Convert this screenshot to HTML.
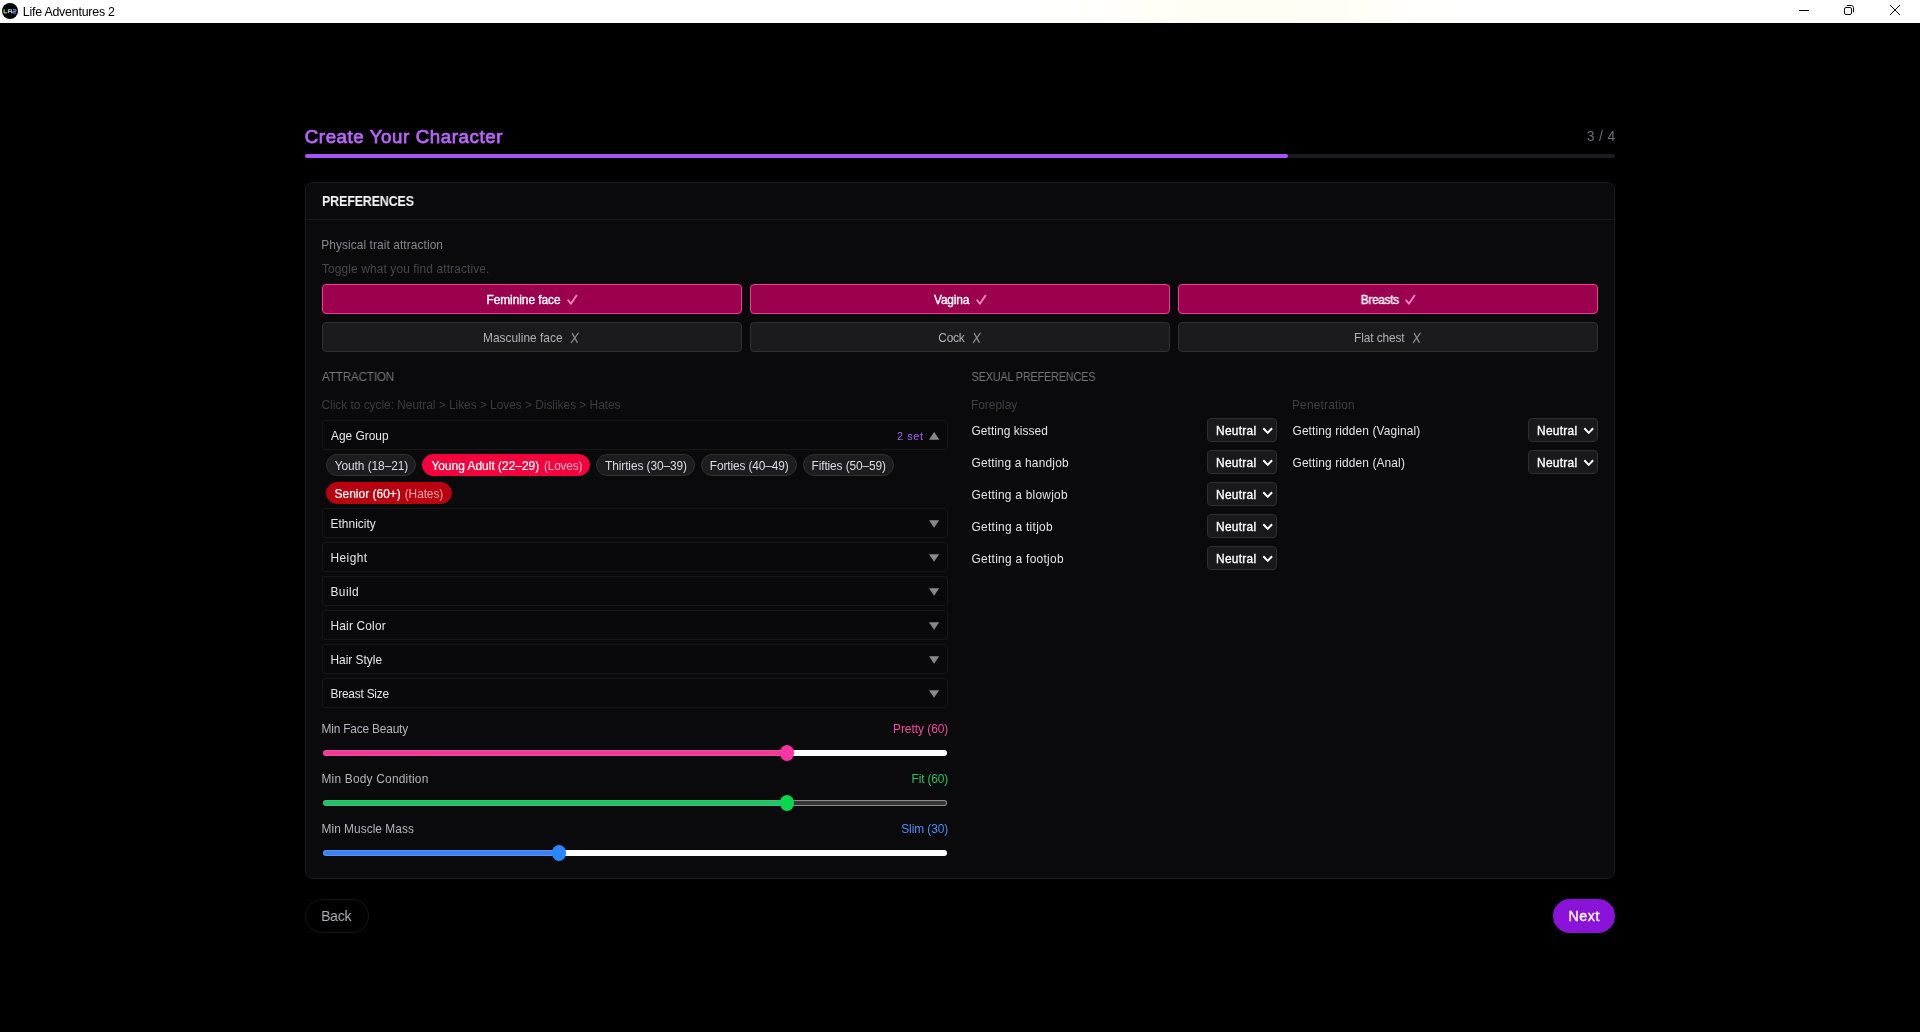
<!DOCTYPE html>
<html lang="en">
<head>
<meta charset="utf-8">
<title>Life Adventures 2</title>
<style>
*{box-sizing:border-box;margin:0;padding:0}
html,body{width:1920px;height:1032px;overflow:hidden;background:#000}
h1,h2,h3{font-weight:400;font-size:inherit}
button{border:0;background:none;font:inherit;color:inherit;padding:0;margin:0;appearance:none;-webkit-appearance:none;text-align:left;cursor:pointer;overflow:visible}
body{position:relative;font-family:"Liberation Sans",sans-serif;font-size:12px;color:#e6e6ea}
.app,.abs,.t,.titlebar,.track,.fill,.card,.hr,.trait,.row,.chip,.sel,.sl,.thumb,.pill,svg.i{position:absolute}
.t{will-change:transform;transform-origin:0 0;white-space:nowrap;line-height:16px;height:16px;display:block}
/* window chrome */
.titlebar{left:0;top:0;width:1920px;height:23px;background:linear-gradient(90deg,#fff 0,#fff 54%,#fffef4 63%,#fffef6 70%,#fff 76%,#fff 100%)}
/* wizard header */
.track{left:305px;top:154px;width:1310px;height:4px;border-radius:2px;background:#1b1b1f}
.fill{left:305px;top:154px;width:983px;height:4px;border-radius:2px;background:#a653f5}
/* card */
.card{left:305px;top:182px;width:1310px;height:697px;border:1px solid #1b1b1f;border-radius:8px;background:#0a0a0c}
.hr{left:306px;top:219px;width:1308px;height:1px;background:#1b1b1f}
/* trait toggles */
.trait{width:420px;height:30px;border-radius:4px;border:1px solid #2f2f34;background:#1b1b1e}
.trait.on{border-color:#ec3d8f;background:#9b004f}
/* accordion rows */
.row{left:322px;width:626px;height:30px;border:1px solid #18181b;border-radius:4px;background:#09090b}
/* chips */
.chip{height:22px;border-radius:11px;border:1px solid #303035;background:#1d1d21}
.chip.love{border-color:#f5003d;background:#f5003d}
.chip.hate{border-color:#b8000f;background:#b8000f}
/* selects */
.sel{width:70px;height:24px;border-radius:4px;border:1px solid #2d2d32;background:#19191c}
/* sliders */
.sl{left:322px;width:626px;height:6px;border-radius:3px}
.thumb{width:14.2px;height:15.2px;border-radius:50%}
/* footer */
.pill{height:34px;border-radius:17px}
</style>
</head>
<body>
<main class="app" style="left:0px;top:0px;width:1920px;height:1032px;">
 <header class="titlebar" style="left:0px;top:0px;width:1920px;height:23px;">
  <svg class="i" style="left:2px;top:3px;" width="16" height="16" viewBox="0 0 16 16"><defs><linearGradient id="lg" x1="0" x2="1" y1="0" y2="0"><stop offset="0" stop-color="#efe3a0"/><stop offset=".45" stop-color="#9fe0a8"/><stop offset=".75" stop-color="#7fa8f0"/><stop offset="1" stop-color="#8a6cf0"/></linearGradient></defs><circle cx="8" cy="8" r="8" fill="#050508"/><path d="M2.1 6.3v3.6h2.9M6.3 10.2V6.7h3.2v3.5M6.3 8.5h3.2M10.9 6.7h3.1v1.7h-3.1v1.6h3.3" fill="none" stroke="url(#lg)" stroke-width="1"/></svg>
  <span class="t" style="left:22px;top:4px;font-size:12.4px;color:#000;letter-spacing:-0.220px;transform:translateX(0.75px);">Life Adventures 2</span>
  <svg class="i" style="left:1790px;top:0px;" width="130" height="23" viewBox="0 0 130 23" fill="none" stroke="#111" stroke-width="1"><path d="M9 10.5h10"/><rect x="54.5" y="7.5" width="7" height="7" rx="1.5"/><path d="M56.8 5.5h4.5a2.2 2.2 0 0 1 2.2 2.2v4.6"/><path d="M100 5l10 10M110 5l-10 10"/></svg>
 </header>
 <section class="abs" style="left:305px;top:120px;width:1310px;height:40px;">
  <h1 class="t" style="left:-1px;top:9px;font-size:18.7px;color:#b766f6;letter-spacing:0.585px;transform:translateX(0.75px);-webkit-text-stroke:0.75px currentColor;">Create Your Character</h1>
  <span class="t" style="left:1281px;top:8px;font-size:14px;color:#6b6b72;letter-spacing:0.323px;transform:translateX(0.75px);">3 / 4</span>
  <div class="track" style="left:0px;top:34px;width:1310px;height:4px;">
   <div class="fill" style="left:0px;top:0px;width:983px;height:4px;"></div>
  </div>
 </section>
 <section class="card" style="left:305px;top:182px;width:1310px;height:697px;">
  <h2 class="t" style="left:16px;top:10px;font-size:14px;font-weight:700;color:#f2f2f4;letter-spacing:-0.220px;transform:scaleX(0.8953);">PREFERENCES</h2>
  <div class="hr" style="left:0px;top:36px;width:1308px;height:1px;"></div>
  <span class="t" style="left:15px;top:54px;font-size:11.9px;color:#85858d;letter-spacing:0.088px;transform:translateX(0.25px);">Physical trait attraction</span>
  <span class="t" style="left:16px;top:78px;font-size:11.9px;color:#46464d;letter-spacing:0.132px;">Toggle what you find attractive.</span>
  <button class="trait on" style="left:16px;top:101px;width:420px;height:30px;">
   <span class="t" style="left:163px;top:7px;font-size:11.9px;color:#fff;letter-spacing:-0.057px;transform:translateX(0.5px);-webkit-text-stroke:0.35px currentColor;">Feminine face</span>
   <svg class="i" style="left:243.6px;top:8.5px;" width="12" height="12" viewBox="0 0 12 12"><path d="M1.2 6.3l2.7 3.5L9.5 1.6" fill="none" stroke="#ff8ac5" stroke-width="1.8" stroke-linecap="round" stroke-linejoin="round"/></svg>
  </button>
  <button class="trait on" style="left:444px;top:101px;width:420px;height:30px;">
   <span class="t" style="left:183px;top:7px;font-size:11.9px;color:#fff;letter-spacing:-0.161px;-webkit-text-stroke:0.35px currentColor;">Vagina</span>
   <svg class="i" style="left:225.1px;top:8.5px;" width="12" height="12" viewBox="0 0 12 12"><path d="M1.2 6.3l2.7 3.5L9.5 1.6" fill="none" stroke="#ff8ac5" stroke-width="1.8" stroke-linecap="round" stroke-linejoin="round"/></svg>
  </button>
  <button class="trait on" style="left:872px;top:101px;width:420px;height:30px;">
   <span class="t" style="left:181px;top:7px;font-size:11.9px;color:#fff;letter-spacing:-0.220px;transform:translateX(0.75px) scaleX(0.9849);-webkit-text-stroke:0.35px currentColor;">Breasts</span>
   <svg class="i" style="left:226.2px;top:8.5px;" width="12" height="12" viewBox="0 0 12 12"><path d="M1.2 6.3l2.7 3.5L9.5 1.6" fill="none" stroke="#ff8ac5" stroke-width="1.8" stroke-linecap="round" stroke-linejoin="round"/></svg>
  </button>
  <button class="trait" style="left:16px;top:139px;width:420px;height:30px;">
   <span class="t" style="left:160px;top:7px;font-size:11.9px;color:#b0b0b8;letter-spacing:0.015px;">Masculine face</span>
   <svg class="i" style="left:247px;top:9px;" width="10" height="12" viewBox="0 0 10 12"><path d="M2.3 1.4l4.9 9M8.3 1.2L1.2 10.6" fill="none" stroke="#8c8c93" stroke-width="1.2" stroke-linecap="round"/></svg>
  </button>
  <button class="trait" style="left:444px;top:139px;width:420px;height:30px;">
   <span class="t" style="left:187px;top:7px;font-size:11.9px;color:#b0b0b8;letter-spacing:-0.202px;transform:translateX(0.25px);">Cock</span>
   <svg class="i" style="left:221px;top:9px;" width="10" height="12" viewBox="0 0 10 12"><path d="M2.3 1.4l4.9 9M8.3 1.2L1.2 10.6" fill="none" stroke="#8c8c93" stroke-width="1.2" stroke-linecap="round"/></svg>
  </button>
  <button class="trait" style="left:872px;top:139px;width:420px;height:30px;">
   <span class="t" style="left:175px;top:7px;font-size:11.9px;color:#b0b0b8;letter-spacing:-0.098px;">Flat chest</span>
   <svg class="i" style="left:233px;top:9px;" width="10" height="12" viewBox="0 0 10 12"><path d="M2.3 1.4l4.9 9M8.3 1.2L1.2 10.6" fill="none" stroke="#8c8c93" stroke-width="1.2" stroke-linecap="round"/></svg>
  </button>
  <section class="abs" style="left:16px;top:183px;width:626px;height:496px;">
   <h3 class="t" style="left:0px;top:3px;font-size:11.9px;color:#74747c;letter-spacing:-0.220px;transform:scaleX(0.9887);">ATTRACTION</h3>
   <span class="t" style="left:-1px;top:31px;font-size:11.9px;color:#3b3b42;letter-spacing:-0.017px;transform:translateX(0.5px);">Click to cycle: Neutral &gt; Likes &gt; Loves &gt; Dislikes &gt; Hates</span>
   <div class="row" style="left:0px;top:54px;width:626px;height:30px;">
    <span class="t" style="left:8px;top:7px;font-size:11.9px;color:#e6e6ea;letter-spacing:0.001px;">Age Group</span>
    <span class="t" style="left:574px;top:7px;font-size:10.9px;color:#a85ff5;letter-spacing:0.576px;">2 set</span>
    <svg class="i" style="left:606px;top:11px;" width="11" height="8" viewBox="0 0 11 8"><path d="M0 7.8L5.2 0l5.2 7.8z" fill="#88888c"/></svg>
   </div>
   <div class="abs" style="left:0px;top:84px;width:626px;height:58px;">
    <span class="chip" style="left:4px;top:4px;width:90px;height:22px;">
     <span class="t" style="left:7px;top:3px;font-size:11.9px;color:#dcdce2;letter-spacing:-0.065px;transform:translateX(0.75px);">Youth (18–21)</span>
    </span>
    <span class="chip love" style="left:100px;top:4px;width:168px;height:22px;">
     <span class="t" style="left:8px;top:3px;font-size:11.9px;color:#fff;letter-spacing:0.015px;transform:translateX(0.5px);-webkit-text-stroke:0.22px currentColor;">Young Adult (22–29)</span>
     <span class="t" style="left:121px;top:3px;font-size:11.9px;color:#ffb3c6;letter-spacing:-0.197px;">(Loves)</span>
    </span>
    <span class="chip" style="left:274px;top:4px;width:99px;height:22px;">
     <span class="t" style="left:8px;top:3px;font-size:11.9px;color:#dcdce2;letter-spacing:-0.085px;">Thirties (30–39)</span>
    </span>
    <span class="chip" style="left:379px;top:4px;width:96px;height:22px;">
     <span class="t" style="left:7px;top:3px;font-size:11.9px;color:#dcdce2;letter-spacing:-0.123px;transform:translateX(0.75px);">Forties (40–49)</span>
    </span>
    <span class="chip" style="left:481px;top:4px;width:91px;height:22px;">
     <span class="t" style="left:7px;top:3px;font-size:11.9px;color:#dcdce2;letter-spacing:-0.107px;transform:translateX(0.5px);">Fifties (50–59)</span>
    </span>
    <span class="chip hate" style="left:4px;top:32px;width:126px;height:22px;">
     <span class="t" style="left:7px;top:3px;font-size:11.9px;color:#fff;letter-spacing:0.047px;transform:translateX(0.5px);-webkit-text-stroke:0.22px currentColor;">Senior (60+)</span>
     <span class="t" style="left:77px;top:3px;font-size:11.9px;color:#f3a3aa;letter-spacing:-0.085px;transform:translateX(0.75px);">(Hates)</span>
    </span>
   </div>
   <div class="row" style="left:0px;top:142px;width:626px;height:30px;">
    <span class="t" style="left:7px;top:7px;font-size:11.9px;color:#e6e6ea;letter-spacing:0.043px;transform:translateX(0.5px);">Ethnicity</span>
    <svg class="i" style="left:606px;top:11px;" width="11" height="8" viewBox="0 0 11 8"><path d="M0 .3h10.2L5.1 7.8z" fill="#88888c"/></svg>
   </div>
   <div class="row" style="left:0px;top:176px;width:626px;height:30px;">
    <span class="t" style="left:7px;top:7px;font-size:11.9px;color:#e6e6ea;letter-spacing:0.438px;transform:translateX(0.5px);">Height</span>
    <svg class="i" style="left:606px;top:11px;" width="11" height="8" viewBox="0 0 11 8"><path d="M0 .3h10.2L5.1 7.8z" fill="#88888c"/></svg>
   </div>
   <div class="row" style="left:0px;top:210px;width:626px;height:30px;">
    <span class="t" style="left:7px;top:7px;font-size:11.9px;color:#e6e6ea;letter-spacing:0.423px;transform:translateX(0.5px);">Build</span>
    <svg class="i" style="left:606px;top:11px;" width="11" height="8" viewBox="0 0 11 8"><path d="M0 .3h10.2L5.1 7.8z" fill="#88888c"/></svg>
   </div>
   <div class="row" style="left:0px;top:244px;width:626px;height:30px;">
    <span class="t" style="left:7px;top:7px;font-size:11.9px;color:#e6e6ea;letter-spacing:0.182px;transform:translateX(0.5px);">Hair Color</span>
    <svg class="i" style="left:606px;top:11px;" width="11" height="8" viewBox="0 0 11 8"><path d="M0 .3h10.2L5.1 7.8z" fill="#88888c"/></svg>
   </div>
   <div class="row" style="left:0px;top:278px;width:626px;height:30px;">
    <span class="t" style="left:7px;top:7px;font-size:11.9px;color:#e6e6ea;letter-spacing:-0.005px;transform:translateX(0.5px);">Hair Style</span>
    <svg class="i" style="left:606px;top:11px;" width="11" height="8" viewBox="0 0 11 8"><path d="M0 .3h10.2L5.1 7.8z" fill="#88888c"/></svg>
   </div>
   <div class="row" style="left:0px;top:312px;width:626px;height:30px;">
    <span class="t" style="left:7px;top:7px;font-size:11.9px;color:#e6e6ea;letter-spacing:-0.220px;transform:translateX(0.5px);">Breast Size</span>
    <svg class="i" style="left:606px;top:11px;" width="11" height="8" viewBox="0 0 11 8"><path d="M0 .3h10.2L5.1 7.8z" fill="#88888c"/></svg>
   </div>
   <div class="abs" style="left:0px;top:354px;width:626px;height:44px;">
    <span class="t" style="left:-1px;top:1px;font-size:11.9px;color:#b4b4bc;letter-spacing:-0.181px;transform:translateX(0.5px);">Min Face Beauty</span>
    <span class="t" style="left:571px;top:1px;font-size:11.9px;color:#f54a9e;letter-spacing:-0.020px;">Pretty (60)</span>
    <div class="sl" style="left:465.2px;top:30px;width:159.8px;height:6px;background:#fff;border:1px solid #fff;border-left:0;border-radius:0 3px 3px 0;"></div>
    <div class="sl" style="left:1px;top:30px;width:464.2px;height:6px;background:#f93696;border:1px solid #e2559c;border-right:0;border-radius:3px 0 0 3px;"></div>
    <div class="thumb" style="left:458.1px;top:25.4px;background:#ff33a4;"></div>
   </div>
   <div class="abs" style="left:0px;top:404px;width:626px;height:44px;">
    <span class="t" style="left:-1px;top:1px;font-size:11.9px;color:#b4b4bc;letter-spacing:0.214px;transform:translateX(0.5px);">Min Body Condition</span>
    <span class="t" style="left:589px;top:1px;font-size:11.9px;color:#22c55e;letter-spacing:-0.123px;transform:translateX(0.5px);">Fit (60)</span>
    <div class="sl" style="left:465.2px;top:30px;width:159.8px;height:6px;background:#353535;border:1px solid #8c8c8c;border-left:0;border-radius:0 3px 3px 0;"></div>
    <div class="sl" style="left:1px;top:30px;width:464.2px;height:6px;background:#1fc463;border:1px solid #3fbf75;border-right:0;border-radius:3px 0 0 3px;"></div>
    <div class="thumb" style="left:458.1px;top:25.4px;background:#08d64d;"></div>
   </div>
   <div class="abs" style="left:0px;top:454px;width:626px;height:44px;">
    <span class="t" style="left:-1px;top:1px;font-size:11.9px;color:#b4b4bc;letter-spacing:0.040px;transform:translateX(0.5px);">Min Muscle Mass</span>
    <span class="t" style="left:579px;top:1px;font-size:11.9px;color:#4d8df7;letter-spacing:-0.062px;transform:translateX(0.25px);">Slim (30)</span>
    <div class="sl" style="left:237.1px;top:30px;width:387.9px;height:6px;background:#fff;border:1px solid #fff;border-left:0;border-radius:0 3px 3px 0;"></div>
    <div class="sl" style="left:1px;top:30px;width:236.1px;height:6px;background:#3a80f7;border:1px solid #5a93ee;border-right:0;border-radius:3px 0 0 3px;"></div>
    <div class="thumb" style="left:230px;top:25.4px;background:#2a86ff;"></div>
   </div>
  </section>
  <section class="abs" style="left:666px;top:183px;width:626px;height:210px;">
   <h3 class="t" style="left:-1px;top:3px;font-size:11.9px;color:#74747c;letter-spacing:-0.220px;transform:translateX(0.5px) scaleX(0.9174);">SEXUAL PREFERENCES</h3>
   <div class="abs" style="left:0px;top:30px;width:305px;height:180px;">
    <span class="t" style="left:-1px;top:1px;font-size:11.9px;color:#3e3e45;letter-spacing:-0.009px;">Foreplay</span>
    <div class="abs" style="left:0px;top:22px;width:305px;height:24px;">
     <span class="t" style="left:-1px;top:5px;font-size:11.9px;color:#e4e4e8;letter-spacing:0.077px;transform:translateX(0.5px);">Getting kissed</span>
     <div class="sel" style="left:235px;top:0px;width:70px;height:24px;">
      <span class="t" style="left:8px;top:4px;font-size:11.9px;color:#fff;letter-spacing:0.305px;-webkit-text-stroke:0.35px currentColor;">Neutral</span>
      <svg class="i" style="left:54px;top:7.5px;" width="12" height="8" viewBox="0 0 12 8"><path d="M1.3 1.3l4.4 4.6 4.4-4.6" fill="none" stroke="#fff" stroke-width="2"/></svg>
     </div>
    </div>
    <div class="abs" style="left:0px;top:54px;width:305px;height:24px;">
     <span class="t" style="left:-1px;top:5px;font-size:11.9px;color:#e4e4e8;letter-spacing:0.200px;transform:translateX(0.5px);">Getting a handjob</span>
     <div class="sel" style="left:235px;top:0px;width:70px;height:24px;">
      <span class="t" style="left:8px;top:4px;font-size:11.9px;color:#fff;letter-spacing:0.305px;-webkit-text-stroke:0.35px currentColor;">Neutral</span>
      <svg class="i" style="left:54px;top:7.5px;" width="12" height="8" viewBox="0 0 12 8"><path d="M1.3 1.3l4.4 4.6 4.4-4.6" fill="none" stroke="#fff" stroke-width="2"/></svg>
     </div>
    </div>
    <div class="abs" style="left:0px;top:86px;width:305px;height:24px;">
     <span class="t" style="left:-1px;top:5px;font-size:11.9px;color:#e4e4e8;letter-spacing:0.263px;transform:translateX(0.5px);">Getting a blowjob</span>
     <div class="sel" style="left:235px;top:0px;width:70px;height:24px;">
      <span class="t" style="left:8px;top:4px;font-size:11.9px;color:#fff;letter-spacing:0.305px;-webkit-text-stroke:0.35px currentColor;">Neutral</span>
      <svg class="i" style="left:54px;top:7.5px;" width="12" height="8" viewBox="0 0 12 8"><path d="M1.3 1.3l4.4 4.6 4.4-4.6" fill="none" stroke="#fff" stroke-width="2"/></svg>
     </div>
    </div>
    <div class="abs" style="left:0px;top:118px;width:305px;height:24px;">
     <span class="t" style="left:-1px;top:5px;font-size:11.9px;color:#e4e4e8;letter-spacing:0.294px;transform:translateX(0.5px);">Getting a titjob</span>
     <div class="sel" style="left:235px;top:0px;width:70px;height:24px;">
      <span class="t" style="left:8px;top:4px;font-size:11.9px;color:#fff;letter-spacing:0.305px;-webkit-text-stroke:0.35px currentColor;">Neutral</span>
      <svg class="i" style="left:54px;top:7.5px;" width="12" height="8" viewBox="0 0 12 8"><path d="M1.3 1.3l4.4 4.6 4.4-4.6" fill="none" stroke="#fff" stroke-width="2"/></svg>
     </div>
    </div>
    <div class="abs" style="left:0px;top:150px;width:305px;height:24px;">
     <span class="t" style="left:-1px;top:5px;font-size:11.9px;color:#e4e4e8;letter-spacing:0.302px;transform:translateX(0.5px);">Getting a footjob</span>
     <div class="sel" style="left:235px;top:0px;width:70px;height:24px;">
      <span class="t" style="left:8px;top:4px;font-size:11.9px;color:#fff;letter-spacing:0.305px;-webkit-text-stroke:0.35px currentColor;">Neutral</span>
      <svg class="i" style="left:54px;top:7.5px;" width="12" height="8" viewBox="0 0 12 8"><path d="M1.3 1.3l4.4 4.6 4.4-4.6" fill="none" stroke="#fff" stroke-width="2"/></svg>
     </div>
    </div>
   </div>
   <div class="abs" style="left:321px;top:30px;width:305px;height:180px;">
    <span class="t" style="left:-1px;top:1px;font-size:11.9px;color:#3e3e45;letter-spacing:0.192px;">Penetration</span>
    <div class="abs" style="left:0px;top:22px;width:305px;height:24px;">
     <span class="t" style="left:-1px;top:5px;font-size:11.9px;color:#e4e4e8;letter-spacing:0.128px;transform:translateX(0.5px);">Getting ridden (Vaginal)</span>
     <div class="sel" style="left:235px;top:0px;width:70px;height:24px;">
      <span class="t" style="left:8px;top:4px;font-size:11.9px;color:#fff;letter-spacing:0.305px;-webkit-text-stroke:0.35px currentColor;">Neutral</span>
      <svg class="i" style="left:54px;top:7.5px;" width="12" height="8" viewBox="0 0 12 8"><path d="M1.3 1.3l4.4 4.6 4.4-4.6" fill="none" stroke="#fff" stroke-width="2"/></svg>
     </div>
    </div>
    <div class="abs" style="left:0px;top:54px;width:305px;height:24px;">
     <span class="t" style="left:-1px;top:5px;font-size:11.9px;color:#e4e4e8;letter-spacing:0.131px;transform:translateX(0.5px);">Getting ridden (Anal)</span>
     <div class="sel" style="left:235px;top:0px;width:70px;height:24px;">
      <span class="t" style="left:8px;top:4px;font-size:11.9px;color:#fff;letter-spacing:0.305px;-webkit-text-stroke:0.35px currentColor;">Neutral</span>
      <svg class="i" style="left:54px;top:7.5px;" width="12" height="8" viewBox="0 0 12 8"><path d="M1.3 1.3l4.4 4.6 4.4-4.6" fill="none" stroke="#fff" stroke-width="2"/></svg>
     </div>
    </div>
   </div>
  </section>
 </section>
 <footer class="abs" style="left:305px;top:899px;width:1310px;height:34px;">
  <button class="pill" style="left:0px;top:0px;width:64px;height:34px;border:1px solid #151518;background:#000;">
   <span class="t" style="left:15px;top:8px;font-size:14px;color:#b0b0b8;letter-spacing:-0.220px;transform:translateX(0.25px) scaleX(0.9922);">Back</span>
  </button>
  <button class="pill" style="left:1248px;top:0px;width:62px;height:34px;background:#8b12d9;">
   <span class="t" style="left:15px;top:9px;font-size:14px;color:#fff;letter-spacing:0.600px;transform:translateX(0.5px) scaleX(1.0114);-webkit-text-stroke:0.35px currentColor;">Next</span>
  </button>
 </footer>
</main>
</body>
</html>
